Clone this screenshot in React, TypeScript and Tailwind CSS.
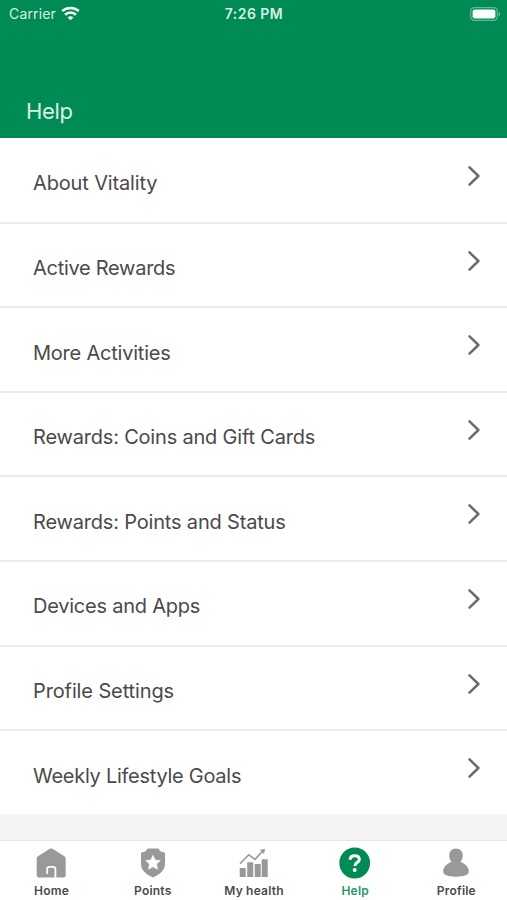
import type { ReactNode } from 'react'

interface Tab {
  label: string
  icon: ReactNode
  active?: boolean
}

const TOPICS: { title: string; className: string }[] = [
  { title: 'About Vitality', className: 'tracking-[-0.15px]' },
  { title: 'Active Rewards', className: 'tracking-[-0.28px]' },
  { title: 'More Activities', className: 'tracking-[-0.22px]' },
  { title: 'Rewards: Coins and Gift Cards', className: 'tracking-[-0.19px]' },
  { title: 'Rewards: Points and Status', className: 'tracking-[-0.18px]' },
  { title: 'Devices and Apps', className: 'tracking-[-0.23px]' },
  { title: 'Profile Settings', className: 'tracking-[-0.12px]' },
  { title: 'Weekly Lifestyle Goals', className: 'tracking-[-0.27px]' },
]

// ─── Icons ────────────────────────────────────────────────────────────────────

function WifiIcon() {
  return (
    <svg width="19" height="15" viewBox="0 0 19 15" fill="none" stroke="#f4fbf7" strokeWidth="2.6">
      <path d="M1.2 5C5.9.9 13.1.9 17.8 5" />
      <path d="M4.1 8.7c3-2.9 7.8-2.9 10.8 0" />
      <path d="M9.5 14.2 6.5 11.4c1.6-1.5 4.4-1.5 6 0z" fill="#f4fbf7" stroke="none" />
    </svg>
  )
}

function BatteryIcon() {
  return (
    <svg width="31" height="14" viewBox="0 0 31 14" fill="none">
      <rect x="0.7" y="0.7" width="26.6" height="12.6" rx="3.6" stroke="#66b894" strokeWidth="1.2" />
      <rect x="2.6" y="2.6" width="22.8" height="8.8" rx="1.8" fill="#fff" />
      <path d="M28.6 4.7c2 .8 2 3.8 0 4.6z" fill="#66b894" />
    </svg>
  )
}

function ChevronIcon() {
  return (
    <svg width="12" height="20" viewBox="0 0 12 20" fill="none" stroke="#6b6b6b" strokeWidth="2.5" strokeLinecap="round" strokeLinejoin="round">
      <path d="m1.5 1.4 8.9 8.6-8.9 8.6" />
    </svg>
  )
}

function HomeIcon() {
  return (
    <svg width="32" height="32" viewBox="0.8 0 32 32">
      <path d="M14.6 1.8a3 3 0 0 1 2.8 0l11.8 7.5a2.6 2.6 0 0 1 1.3 2.2v16.8a2.2 2.2 0 0 1-2.2 2.2H3.7a2.2 2.2 0 0 1-2.2-2.2V11.5a2.6 2.6 0 0 1 1.3-2.2z" fill="#999" />
      <path d="M12 26.2v-4.2a2.2 2.2 0 0 1 2.2-2.2h3.8a2.2 2.2 0 0 1 2.2 2.2v9" fill="none" stroke="#fff" strokeWidth="1.8" strokeLinecap="round" />
    </svg>
  )
}

function ShieldIcon() {
  return (
    <svg width="32" height="32" viewBox="0 0 32 32">
      <path d="M11.4 1.4h9.2q1 0 1.4.9c.9 1.9 2.5 2.9 4.8 3q1.2.1 1.2 1.3v9.9c0 6.6-4.4 10.3-11 13.4q-1 .5-2 0C8.4 26.8 4 23.1 4 16.5V6.6q0-1.2 1.2-1.3c2.3-.1 3.9-1.1 4.8-3q.4-.9 1.4-.9z" fill="#999" />
      <path d="m16 8.3 2.2 4.7 5.1.6-3.8 3.5 1 5.1-4.5-2.5-4.5 2.5 1-5.1-3.8-3.5 5.1-.6z" fill="#fff" stroke="#fff" strokeWidth="0.6" strokeLinejoin="round" />
    </svg>
  )
}

function ChartIcon() {
  return (
    <svg width="32" height="32" viewBox="0.5 0 32 32">
      <path d="M2.2 21h6v9h-6zM9.7 15.2h6V30h-6zM17.2 17h6v13h-6zM24.2 12.2h6V30h-6z" fill="#999" />
      <path d="M2.5 16.7 11.3 7.8l6.2 4.6 8-8.6" fill="none" stroke="#999" strokeWidth="1.6" />
      <path d="m22.3 3 5.2-1.3-.9 5.3z" fill="#999" />
    </svg>
  )
}

function HelpIcon() {
  return (
    <svg width="32" height="32" viewBox="0.3 0 32 32">
      <circle cx="16" cy="16" r="15.4" fill="#008a54" />
      <path d="M11.4 12.7c.1-2.6 1.9-4 4.6-4s4.6 1.4 4.6 3.7c0 3.2-4.5 3.1-4.5 6.6" fill="none" stroke="#fff" strokeWidth="3" />
      <circle cx="16" cy="23.1" r="2" fill="#fff" />
    </svg>
  )
}

function ProfileIcon() {
  return (
    <svg width="32" height="32" viewBox="0 0 32 32">
      <path d="M16 1.4c4.1 0 6.8 2.9 6.8 7 0 2.4-.9 5-2.4 6.7 4.6 1.3 8.4 5.2 8.4 9.2 0 1.6-.5 2.6-1.6 3.2-5.8 3-16.6 3-22.4 0-1.1-.6-1.6-1.6-1.6-3.2 0-4 3.8-7.900 8.4-9.2-1.5-1.7-2.4-4.3-2.4-6.7 0-4.1 2.7-7 6.8-7z" fill="#999" />
    </svg>
  )
}

const TABS: Tab[] = [
  { label: 'Home', icon: <HomeIcon /> },
  { label: 'Points', icon: <ShieldIcon /> },
  { label: 'My health', icon: <ChartIcon /> },
  { label: 'Help', icon: <HelpIcon />, active: true },
  { label: 'Profile', icon: <ProfileIcon /> },
]

// ─── Screen ───────────────────────────────────────────────────────────────────

export default function App() {
  return (
    <div className="flex h-[900px] w-[507px] flex-col overflow-hidden bg-[#f4f4f4] font-['Inter',sans-serif]">
      <header className="flex h-[138px] shrink-0 flex-col justify-between bg-[#008a54] pb-[12px]">
        <div className="grid h-[27px] grid-cols-3 items-center pr-[6px] pl-[9px] text-[#d9f0e5]">
          <div className="flex items-center gap-[5px] text-[14px] tracking-[0.15px]">
            <span>Carrier</span>
            <WifiIcon />
          </div>
          <span className="pr-[2px] text-center text-[14px] font-semibold tracking-[0.45px]">7:26 PM</span>
          <div className="flex justify-end">
            <BatteryIcon />
          </div>
        </div>
        <h1 className="pl-[26px] text-[22px] leading-[30px] tracking-[-0.3px] text-[#d9f0e5]">Help</h1>
      </header>

      <ul className="shrink-0 bg-white pt-px">
        {TOPICS.map(({ title, className }) => (
          <li key={title} className="flex h-[84.6px] items-start justify-between border-b-2 border-[#ebebeb] pr-[27px] pl-[33px] last:h-[83px] last:border-0">
            <span className={`pt-[29.35px] text-[20px] leading-[30px] text-[#4a4a4a] ${className}`}>{title}</span>
            <span className="pt-[27px]">
              <ChevronIcon />
            </span>
          </li>
        ))}
      </ul>

      <nav className="mt-auto grid h-[60px] shrink-0 grid-cols-5 border-t border-[#e6e6e6] bg-white pl-px">
        {TABS.map(({ label, icon, active }) => (
          <div key={label} className="flex flex-col items-center pt-[6px]">
            {icon}
            <span className={`mt-[4px] text-[12px] leading-[16px] font-semibold tracking-[0.2px] ${active ? 'text-[#1b9a66]' : 'text-[#4a4a4a]'}`}>
              {label}
            </span>
          </div>
        ))}
      </nav>
    </div>
  )
}
